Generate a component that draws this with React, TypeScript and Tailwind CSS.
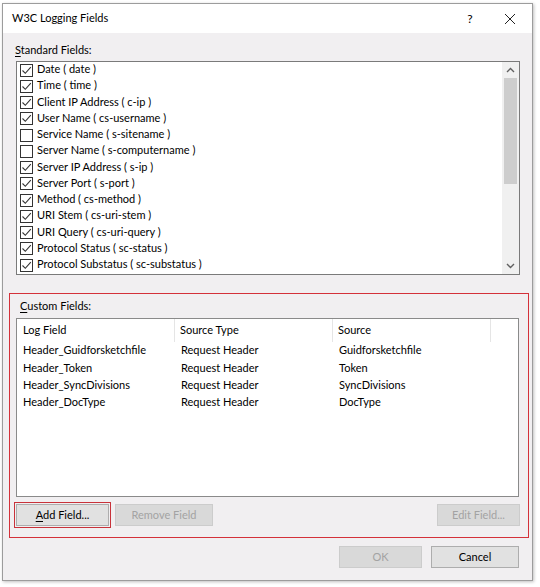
import React from "react";

const std: [string, boolean][] = [
  ["Date ( date )", true],
  ["Time ( time )", true],
  ["Client IP Address ( c-ip )", true],
  ["User Name ( cs-username )", true],
  ["Service Name ( s-sitename )", false],
  ["Server Name ( s-computername )", false],
  ["Server IP Address ( s-ip )", true],
  ["Server Port ( s-port )", true],
  ["Method ( cs-method )", true],
  ["URI Stem ( cs-uri-stem )", true],
  ["URI Query ( cs-uri-query )", true],
  ["Protocol Status ( sc-status )", true],
  ["Protocol Substatus ( sc-substatus )", true],
];

const custom = [
  ["Header_Guidforsketchfile", "Request Header", "Guidforsketchfile"],
  ["Header_Token", "Request Header", "Token"],
  ["Header_SyncDivisions", "Request Header", "SyncDivisions"],
  ["Header_DocType", "Request Header", "DocType"],
];

function Check({ on }: { on: boolean }) {
  return (
    <div className="w-[13px] h-[13px] border border-[#333333] bg-white flex items-center justify-center shrink-0">
      {on && (
        <svg width="11" height="11" viewBox="0 0 11 11">
          <path d="M1.5 5.5 L4.3 8.3 L9.8 2.2" fill="none" stroke="#333" strokeWidth="1.1" />
        </svg>
      )}
    </div>
  );
}

export default function App() {
  return (
    <div
      className="w-[540px] h-[587px] bg-white pt-[3px] pl-[2px] text-[11px] text-black"
      style={{ fontFamily: 'Lato, "Noto Sans", sans-serif' }}
    >
      <div className="w-[531px] h-[578px] border border-[#9c9c9c] bg-[#f1eff1] flex flex-col shadow-[1px_1px_3px_rgba(0,0,0,0.25)]">
        <div className="h-[29px] bg-white flex items-center pl-[9px] shrink-0">
          <span className="flex-1">W3C Logging Fields</span>
          <span className="w-[20px] text-center mr-[24px] text-[12px]">?</span>
          <svg width="12" height="12" viewBox="0 0 12 12" className="mr-[16px]">
            <path d="M1 1 L11 11 M11 1 L1 11" stroke="#222" strokeWidth="1" />
          </svg>
        </div>

        <div className="pl-[12px] pt-[9px] h-[28px] leading-[16px]">
          <span className="underline decoration-1 underline-offset-2">S</span>tandard Fields:
        </div>

        <div className="ml-[13px] w-[504px] h-[214px] border border-[#7a7a7a] bg-white flex">
          <div className="flex-1 flex flex-col pl-[3px]">
            {std.map(([t, on]) => (
              <div key={t} className="h-[16.25px] flex items-center gap-[4px] leading-none whitespace-nowrap">
                <Check on={on} />
                <span className="pb-[3px]">{t}</span>
              </div>
            ))}
          </div>
          <div className="w-[17px] bg-[#f0f0f0] flex flex-col items-center">
            <div className="h-[16px] flex items-center justify-center">
              <svg width="9" height="6" viewBox="0 0 9 6">
                <path d="M1 5 L4.5 1.5 L8 5" fill="none" stroke="#606060" strokeWidth="1.4" />
              </svg>
            </div>
            <div className="w-[13px] h-[106px] bg-[#cdcdcd]" />
            <div className="flex-1" />
            <div className="h-[16px] flex items-center justify-center">
              <svg width="9" height="6" viewBox="0 0 9 6">
                <path d="M1 1 L4.5 4.5 L8 1" fill="none" stroke="#606060" strokeWidth="1.4" />
              </svg>
            </div>
          </div>
        </div>

        <div className="ml-[6px] mt-[18px] w-[520px] h-[245px] border-[1.5px] border-[#d4313a] flex flex-col">
          <div className="pl-[10px] pt-[4px] h-[24px] leading-[16px]">
            <span className="underline decoration-1 underline-offset-2">C</span>ustom Fields:
          </div>
          <div className="ml-[6px] w-[503px] h-[179px] border border-[#8a8a8a] bg-white flex flex-col">
            <div className="h-[23px] flex items-center shrink-0">
              <div className="w-[158px] pl-[6px] border-r border-[#e5e5e5] h-full flex items-center">Log Field</div>
              <div className="w-[158px] pl-[5px] border-r border-[#e5e5e5] h-full flex items-center">Source Type</div>
              <div className="w-[158px] pl-[5px] border-r border-[#e5e5e5] h-full flex items-center">Source</div>
            </div>
            <div className="flex flex-col">
              {custom.map((r) => (
                <div key={r[0]} className="h-[17.3px] flex items-center">
                  <div className="w-[158px] pl-[6px]">{r[0]}</div>
                  <div className="w-[158px] pl-[6px]">{r[1]}</div>
                  <div className="w-[158px] pl-[6px]">{r[2]}</div>
                </div>
              ))}
            </div>
          </div>
          <div className="flex items-center mt-[5px] ml-[4px]">
            <div className="border-[1.5px] border-[#c8323a] p-[1px]">
              <div className="w-[93px] h-[22px] bg-[#e1e1e1] border border-[#adadad] flex items-center justify-center">
                <span><span className="underline decoration-1 underline-offset-2">A</span>dd Field...</span>
              </div>
            </div>
            <div className="ml-[4px] w-[98px] h-[22px] bg-[#d9d9d9] border border-[#cccccc] flex items-center justify-center text-[#a3a3a3]">
              Remove Field
            </div>
            <div className="flex-1" />
            <div className="mr-[8px] w-[83px] h-[22px] bg-[#d9d9d9] border border-[#cccccc] flex items-center justify-center text-[#a3a3a3]">
              Edit Field...
            </div>
          </div>
        </div>

        <div className="flex justify-end mt-[8px] mr-[13px] gap-[9px]">
          <div className="w-[83px] h-[22px] bg-[#d9d9d9] border border-[#cccccc] flex items-center justify-center text-[#a3a3a3]">
            OK
          </div>
          <div className="w-[88px] h-[22px] bg-[#e1e1e1] border border-[#adadad] flex items-center justify-center">
            Cancel
          </div>
        </div>
      </div>
    </div>
  );
}
